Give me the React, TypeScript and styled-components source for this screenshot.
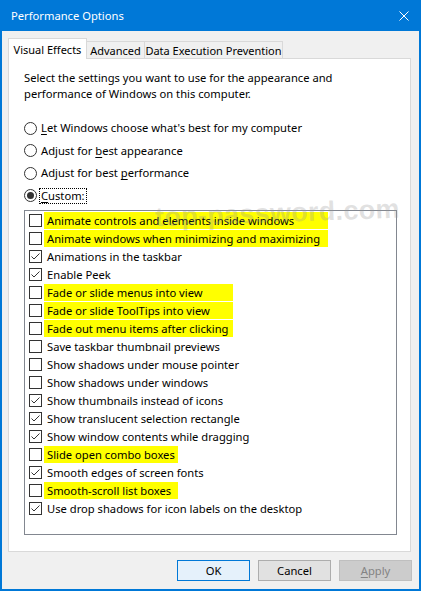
import React from "react";
import styled, { createGlobalStyle } from "styled-components";

const Global = createGlobalStyle`
  html, body { margin: 0; padding: 0; background: #ffffff; }
  body { font-family: "Noto Sans", "Open Sans", sans-serif; font-size: 11.2px; color: #000; }
  * { box-sizing: border-box; }
`;

const Window = styled.div`
  width: 421px;
  height: 591px;
  background: #0078d7;
  display: flex;
  flex-direction: column;
  padding: 0 2px 2px 2px;
  position: relative;
  overflow: hidden;
`;

const TitleBar = styled.div`
  height: 31px;
  display: flex;
  align-items: center;
  justify-content: space-between;
  color: #fff;
  font-size: 11.2px;
  margin: 0 -2px;
  padding: 0 12px 0 11px;
`;

const CloseIcon = styled.svg`
  width: 10px;
  height: 10px;
`;

const Body = styled.div`
  flex: 1;
  background: #f0f0f0;
  display: flex;
  flex-direction: column;
  padding: 7px 8px 7px 6px;
`;

const TabStrip = styled.div`
  display: flex;
  align-items: flex-end;
  height: 21px;
  position: relative;
  z-index: 1;
`;

const Tab = styled.div<{ $active?: boolean; $w: number }>`
  width: ${(p) => p.$w}px;
  height: ${(p) => (p.$active ? 21 : 18)}px;
  background: ${(p) => (p.$active ? "#ffffff" : "#f0f0f0")};
  border: 1px solid #d9d9d9;
  border-bottom: ${(p) => (p.$active ? "none" : "1px solid #d9d9d9")};
  margin-left: -1px;
  display: flex;
  align-items: center;
  justify-content: center;
  padding-top: ${(p) => (p.$active ? 0 : 1)}px;
  font-size: 11px;
  white-space: nowrap;
  &:first-child { margin-left: 0; }
`;

const Panel = styled.div`
  height: 494px;
  background: #fff;
  border: 1px solid #d9d9d9;
  margin-top: -1px;
  padding: 11px 13px 0 15px;
  display: flex;
  flex-direction: column;
  position: relative;
  overflow: hidden;
`;

const Description = styled.p`
  margin: 0;
  line-height: 16px;
`;

const RadioGroup = styled.div`
  display: flex;
  flex-direction: column;
  margin-top: 18px;
  gap: 6px;
`;

const RadioRow = styled.div`
  display: flex;
  align-items: center;
  height: 16.5px;
`;

const RadioCircle = styled.span<{ $on?: boolean }>`
  width: 13px;
  height: 13px;
  border-radius: 50%;
  border: 1px solid #333333;
  background: #fff;
  margin-right: 2px;
  display: flex;
  align-items: center;
  justify-content: center;
  &::after {
    content: "";
    display: ${(p) => (p.$on ? "block" : "none")};
    width: 7px;
    height: 7px;
    border-radius: 50%;
    background: #333333;
  }
`;

const RadioLabel = styled.span<{ $focus?: boolean }>`
  padding: 0 1px;
  border: 1px dotted ${(p) => (p.$focus ? "#000" : "transparent")};
  line-height: 14px;
`;

const U = styled.span`
  text-decoration: underline;
  text-underline-offset: 2px;
`;

const ListBox = styled.div`
  margin-top: 6px;
  height: 325px;
  border: 1px solid #828790;
  padding: 0 4px 0 4px;
  display: flex;
  flex-direction: column;
`;

const CheckRow = styled.div`
  height: 18px;
  display: flex;
  align-items: center;
`;

const CheckBox = styled.span`
  width: 13px;
  height: 13px;
  border: 1px solid #333333;
  background: #fff;
  margin-right: 2px;
  flex-shrink: 0;
  display: flex;
`;

const CheckLabel = styled.span<{ $hl?: number }>`
  background: ${(p) => (p.$hl ? "#ffff00" : "transparent")};
  width: ${(p) => (p.$hl ? `${p.$hl}px` : "auto")};
  padding: 0 3px;
  height: 17px;
  line-height: 17px;
  white-space: nowrap;
`;

const Watermark = styled.div`
  position: absolute;
  left: 146px;
  top: 139px;
  font-family: "Liberation Sans", sans-serif;
  font-weight: bold;
  font-size: 27px;
  letter-spacing: 0.3px;
  color: rgba(150, 150, 150, 0.28);
  pointer-events: none;
  white-space: nowrap;
  transform: rotate(-2deg);
`;

const ButtonRow = styled.div`
  display: flex;
  justify-content: flex-end;
  gap: 8px;
  margin-top: 8px;
  margin-right: -1px;
`;

const Button = styled.div<{ $kind?: "default" | "normal" | "disabled" }>`
  width: 73px;
  height: 21px;
  display: flex;
  align-items: center;
  justify-content: center;
  border: 1px solid
    ${(p) => (p.$kind === "default" ? "#0078d7" : p.$kind === "disabled" ? "#bfbfbf" : "#adadad")};
  background: ${(p) => (p.$kind === "default" ? "#e5f1fb" : p.$kind === "disabled" ? "#cccccc" : "#e1e1e1")};
  color: ${(p) => (p.$kind === "disabled" ? "#838383" : "#000")};
`;

const items: { label: string; checked: boolean; hl?: number }[] = [
  { label: "Animate controls and elements inside windows", checked: false, hl: 284 },
  { label: "Animate windows when minimizing and maximizing", checked: false, hl: 284 },
  { label: "Animations in the taskbar", checked: true },
  { label: "Enable Peek", checked: true },
  { label: "Fade or slide menus into view", checked: false, hl: 189 },
  { label: "Fade or slide ToolTips into view", checked: false, hl: 189 },
  { label: "Fade out menu items after clicking", checked: false, hl: 189 },
  { label: "Save taskbar thumbnail previews", checked: false },
  { label: "Show shadows under mouse pointer", checked: false },
  { label: "Show shadows under windows", checked: false },
  { label: "Show thumbnails instead of icons", checked: true },
  { label: "Show translucent selection rectangle", checked: true },
  { label: "Show window contents while dragging", checked: true },
  { label: "Slide open combo boxes", checked: false, hl: 134 },
  { label: "Smooth edges of screen fonts", checked: true },
  { label: "Smooth-scroll list boxes", checked: false, hl: 134 },
  { label: "Use drop shadows for icon labels on the desktop", checked: true },
];

export default function App() {
  return (
    <>
      <Global />
      <Window>
        <TitleBar>
          <span>Performance Options</span>
          <CloseIcon viewBox="0 0 10 10">
            <path d="M0.5 0.5 L9.5 9.5 M9.5 0.5 L0.5 9.5" stroke="#fff" strokeWidth="1" fill="none" />
          </CloseIcon>
        </TitleBar>
        <Body>
          <TabStrip>
            <Tab $active $w={79}>Visual Effects</Tab>
            <Tab $w={59}>Advanced</Tab>
            <Tab $w={139}>Data Execution Prevention</Tab>
          </TabStrip>
          <Panel>
            <Description>
              Select the settings you want to use for the appearance and
              <br />
              performance of Windows on this computer.
            </Description>
            <RadioGroup>
              <RadioRow>
                <RadioCircle />
                <RadioLabel>
                  <U>L</U>et Windows choose what's best for my computer
                </RadioLabel>
              </RadioRow>
              <RadioRow>
                <RadioCircle />
                <RadioLabel>
                  Adjust for <U>b</U>est appearance
                </RadioLabel>
              </RadioRow>
              <RadioRow>
                <RadioCircle />
                <RadioLabel>
                  Adjust for best <U>p</U>erformance
                </RadioLabel>
              </RadioRow>
              <RadioRow>
                <RadioCircle $on />
                <RadioLabel $focus>
                  <U>C</U>ustom:
                </RadioLabel>
              </RadioRow>
            </RadioGroup>
            <ListBox>
              {items.map((it) => (
                <CheckRow key={it.label}>
                  <CheckBox>
                    {it.checked && (
                      <svg width="11" height="11" viewBox="0 0 11 11">
                        <polyline points="1.5,5.5 4,8 9.5,2.5" stroke="#333" strokeWidth="1" fill="none" />
                      </svg>
                    )}
                  </CheckBox>
                  <CheckLabel $hl={it.hl}>{it.label}</CheckLabel>
                </CheckRow>
              ))}
            </ListBox>
            <Watermark>top-password.com</Watermark>
          </Panel>
          <ButtonRow>
            <Button $kind="default">OK</Button>
            <Button>Cancel</Button>
            <Button $kind="disabled">
              <U>A</U>pply
            </Button>
          </ButtonRow>
        </Body>
      </Window>
    </>
  );
}
